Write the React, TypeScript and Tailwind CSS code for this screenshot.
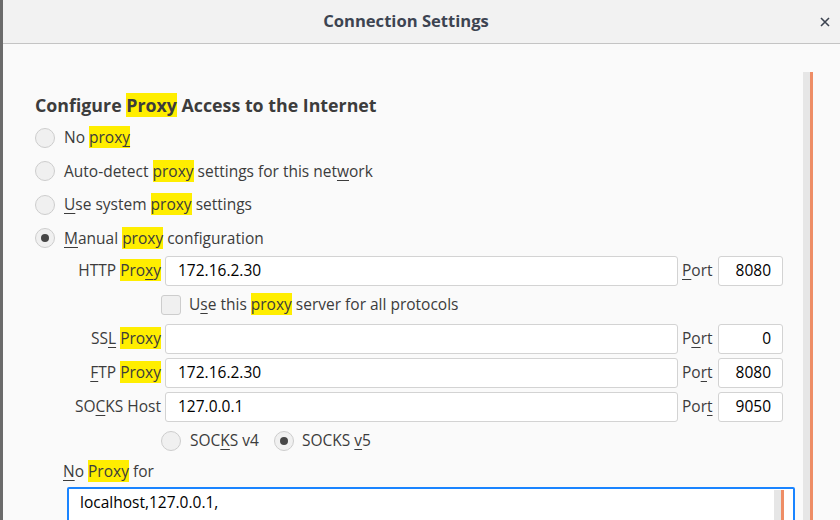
import React from 'react'

const font = { fontFamily: '"Open Sans", "Noto Sans", sans-serif' }

const Hl = ({ children }: { children: React.ReactNode }) => (
    <span className="bg-[#ffee00]">{children}</span>
)

const Key = ({ children }: { children: React.ReactNode }) => (
    <span className="underline underline-offset-[3px] decoration-1">{children}</span>
)

const Radio = ({ checked }: { checked?: boolean }) => (
    <span className="flex h-[20px] w-[20px] shrink-0 items-center justify-center rounded-full border border-[#cdcdcd] bg-[#f0f0f0]">
        {checked && <span className="h-[8px] w-[8px] rounded-full bg-[#464646]" />}
    </span>
)

const RadioRow = ({ checked, children }: { checked?: boolean; children: React.ReactNode }) => (
    <div className="flex h-[33.5px] items-center gap-[9px]">
        <Radio checked={checked} />
        <span>{children}</span>
    </div>
)

const Field = ({ value, right }: { value?: string; right?: boolean }) => (
    <div
        className={`flex h-[30px] items-center rounded-[3px] border border-[#d3d3d3] bg-white text-black ${right ? 'justify-end pr-[11px]' : 'px-[12px]'}`}
    >
        {value}
    </div>
)

const ProxyRow = ({ label, value, port, portLabel }: { label: React.ReactNode; value?: string; port: string; portLabel: React.ReactNode }) => (
    <div className="flex h-[30px] items-center">
        <div className="w-[130px] shrink-0 whitespace-nowrap pr-[4px] text-right">{label}</div>
        <div className="w-[513px] shrink-0"><Field value={value} /></div>
        <div className="w-[40px] shrink-0 whitespace-nowrap pl-[4px]">{portLabel}</div>
        <div className="w-[65px] shrink-0"><Field value={port} right /></div>
    </div>
)

export default function App() {
    return (
        <div
            className="flex h-[520px] w-[840px] flex-col overflow-hidden border-l-[3px] border-[#6b6b6b] bg-[#fafafa] text-[15.5px] text-[#3c3c3c]"
            style={font}
        >
            <div className="relative flex h-[44px] shrink-0 items-center justify-center border-b border-[#c4c4c4] bg-[#f2f2f2] pr-[31px]">
                <span className="text-[16.6px] font-bold text-[#3d4451]">Connection Settings</span>
                <svg className="absolute right-[10px] top-[17px]" width="10" height="10" viewBox="0 0 10 10">
                    <path d="M1 1 L9 9 M9 1 L1 9" stroke="#3d4451" strokeWidth="1.6" />
                </svg>
            </div>

            <div className="flex min-h-0 flex-1">
                <div className="flex-1 pl-[32px] pt-[50px]">
                    <h1 className="text-[17.8px] font-bold leading-[22px] text-[#3c3c3c]">
                        Configure <Hl>Proxy</Hl> Access to the Internet
                    </h1>

                    <div className="mt-[5px] flex flex-col">
                        <RadioRow>No <Hl>prox<Key>y</Key></Hl></RadioRow>
                        <RadioRow>Auto-detect <Hl>proxy</Hl> settings for this net<Key>w</Key>ork</RadioRow>
                        <RadioRow><Key>U</Key>se system <Hl>proxy</Hl> settings</RadioRow>
                        <RadioRow checked><Key>M</Key>anual <Hl>proxy</Hl> configuration</RadioRow>
                    </div>

                    <div className="mt-[1px] flex flex-col">
                        <ProxyRow
                            label={<>HTTP <Hl>Pro<Key>x</Key>y</Hl></>}
                            value="172.16.2.30"
                            portLabel={<><Key>P</Key>ort</>}
                            port="8080"
                        />
                        <div className="flex h-[38px] items-center gap-[8px] pl-[126px]">
                            <span className="h-[20px] w-[20px] rounded-[3px] border border-[#cdcdcd] bg-[#f0f0f0]" />
                            <span>U<Key>s</Key>e this <Hl>proxy</Hl> server for all protocols</span>
                        </div>
                        <ProxyRow
                            label={<>SS<Key>L</Key> <Hl>Proxy</Hl></>}
                            portLabel={<>P<Key>o</Key>rt</>}
                            port="0"
                        />
                        <div className="h-[4px]" />
                        <ProxyRow
                            label={<><Key>F</Key>TP <Hl>Proxy</Hl></>}
                            value="172.16.2.30"
                            portLabel={<>Po<Key>r</Key>t</>}
                            port="8080"
                        />
                        <div className="h-[4px]" />
                        <ProxyRow
                            label={<>SO<Key>C</Key>KS Host</>}
                            value="127.0.0.1"
                            portLabel={<>Por<Key>t</Key></>}
                            port="9050"
                        />
                    </div>

                    <div className="flex h-[38px] items-center pl-[126px]">
                        <div className="flex w-[113px] items-center gap-[9px]">
                            <Radio />
                            <span>SOC<Key>K</Key>S v4</span>
                        </div>
                        <div className="flex items-center gap-[8px]">
                            <Radio checked />
                            <span>SOCKS <Key>v</Key>5</span>
                        </div>
                    </div>

                    <div className="flex h-[24px] items-center pl-[28px]">
                        <span><Key>N</Key>o <Hl>Proxy</Hl> for</span>
                    </div>

                    <div className="ml-[32px] mt-[3px] flex h-[60px] w-[728px] rounded-[2px] border-2 border-[#1a84ff] bg-white">
                        <div className="flex-1 pl-[11px] pt-[2px] text-black">localhost,127.0.0.1,</div>
                        <div className="mr-[9px] mt-[1px] flex w-[10px]">
                            <div className="w-[7px] bg-[#e6e6e6]" />
                            <div className="w-[3px] bg-[#ee8d66]" />
                        </div>
                    </div>
                </div>

                <div className="mr-[27px] mt-[28px] flex w-[10px] shrink-0">
                    <div className="w-[7px] bg-[#e6e6e6]" />
                    <div className="w-[3px] bg-[#ee8d66]" />
                </div>
            </div>
        </div>
    )
}
